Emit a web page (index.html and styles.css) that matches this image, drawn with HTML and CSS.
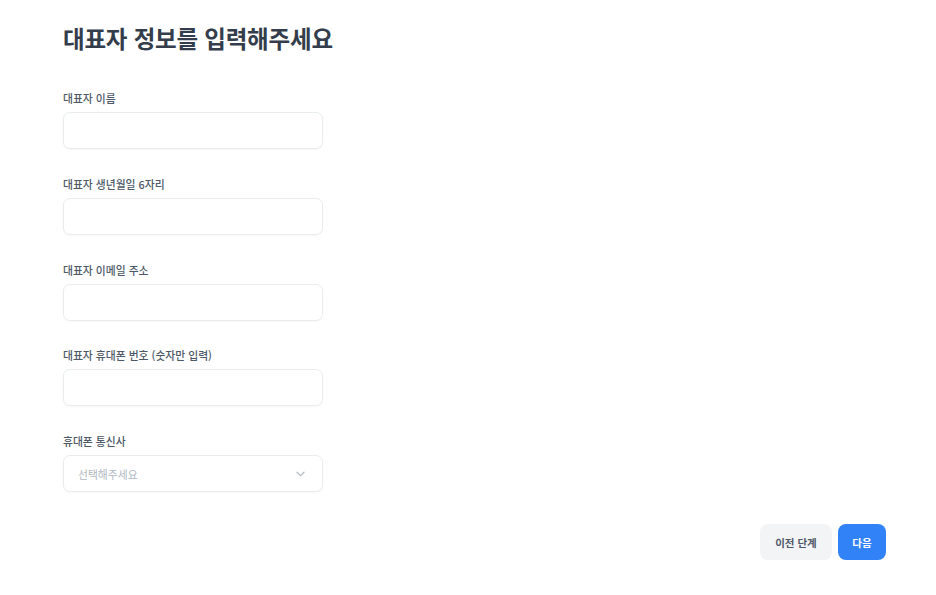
FILE: index.html
```html
<!DOCTYPE html>
<html lang="ko">
<head>
<meta charset="utf-8">
<title>대표자 정보</title>
<link rel="stylesheet" href="styles.css">
</head>
<body>
<main class="page">
  <h1 class="title">대표자 정보를 입력해주세요</h1>
  <form class="form">
    <div class="field">
      <label class="label">대표자 이름</label>
      <div class="input"></div>
    </div>
    <div class="field">
      <label class="label">대표자 생년월일 6자리</label>
      <div class="input"></div>
    </div>
    <div class="field">
      <label class="label">대표자 이메일 주소</label>
      <div class="input"></div>
    </div>
    <div class="field">
      <label class="label">대표자 휴대폰 번호 (숫자만 입력)</label>
      <div class="input"></div>
    </div>
    <div class="field">
      <label class="label">휴대폰 통신사</label>
      <div class="input select">
        <span class="placeholder">선택해주세요</span>
        <svg class="chevron" width="9" height="6" viewBox="0 0 9 6"><path d="M1 1.2 L4.5 4.6 L8 1.2" fill="none" stroke="#b0b8c1" stroke-width="1.2" stroke-linecap="round" stroke-linejoin="round"/></svg>
      </div>
    </div>
  </form>
  <div class="footer">
    <button class="btn btn-secondary" type="button">이전 단계</button>
    <button class="btn btn-primary" type="button">다음</button>
  </div>
</main>
</body>
</html>
```
FILE: styles.css
```css
* { box-sizing: border-box; }
html, body {
  margin: 0;
  background: #ffffff;
  font-family: "Noto Sans CJK KR", "Noto Sans", sans-serif;
}
.page {
  padding: 22px 50px 0 63px;
  display: flex;
  flex-direction: column;
}
.title {
  margin: 0;
  font-size: 23.5px;
  line-height: 32px;
  font-weight: 700;
  color: #333d4b;
  letter-spacing: -0.2px;
}
.form {
  margin-top: 37px;
  display: flex;
  flex-direction: column;
  gap: 27.75px;
}
.field {
  display: flex;
  flex-direction: column;
  gap: 7px;
}
.label {
  font-size: 10.8px;
  line-height: 14px;
  font-weight: 500;
  color: #4e5968;
}
.input {
  width: 260px;
  height: 37px;
  border: 1px solid #e9ecef;
  border-radius: 7px;
  background: #ffffff;
  box-shadow: 0 1px 2px rgba(0, 0, 0, 0.03);
}
.select {
  display: flex;
  align-items: center;
  justify-content: space-between;
  padding: 0 17px 0 14px;
}
.placeholder {
  font-size: 10.8px;
  color: #b0b8c1;
}
.chevron { display: block; }
.footer {
  margin-top: 32px;
  display: flex;
  justify-content: flex-end;
  gap: 6px;
}
.btn {
  height: 36px;
  border: none;
  border-radius: 8px;
  font-family: inherit;
  font-size: 10.5px;
  font-weight: 600;
  padding: 0 14px;
}
.btn-secondary {
  background: #f2f4f6;
  color: #4e5968;
  width: 72px;
}
.btn-primary {
  background: #3182f6;
  color: #ffffff;
  width: 48px;
}
```
